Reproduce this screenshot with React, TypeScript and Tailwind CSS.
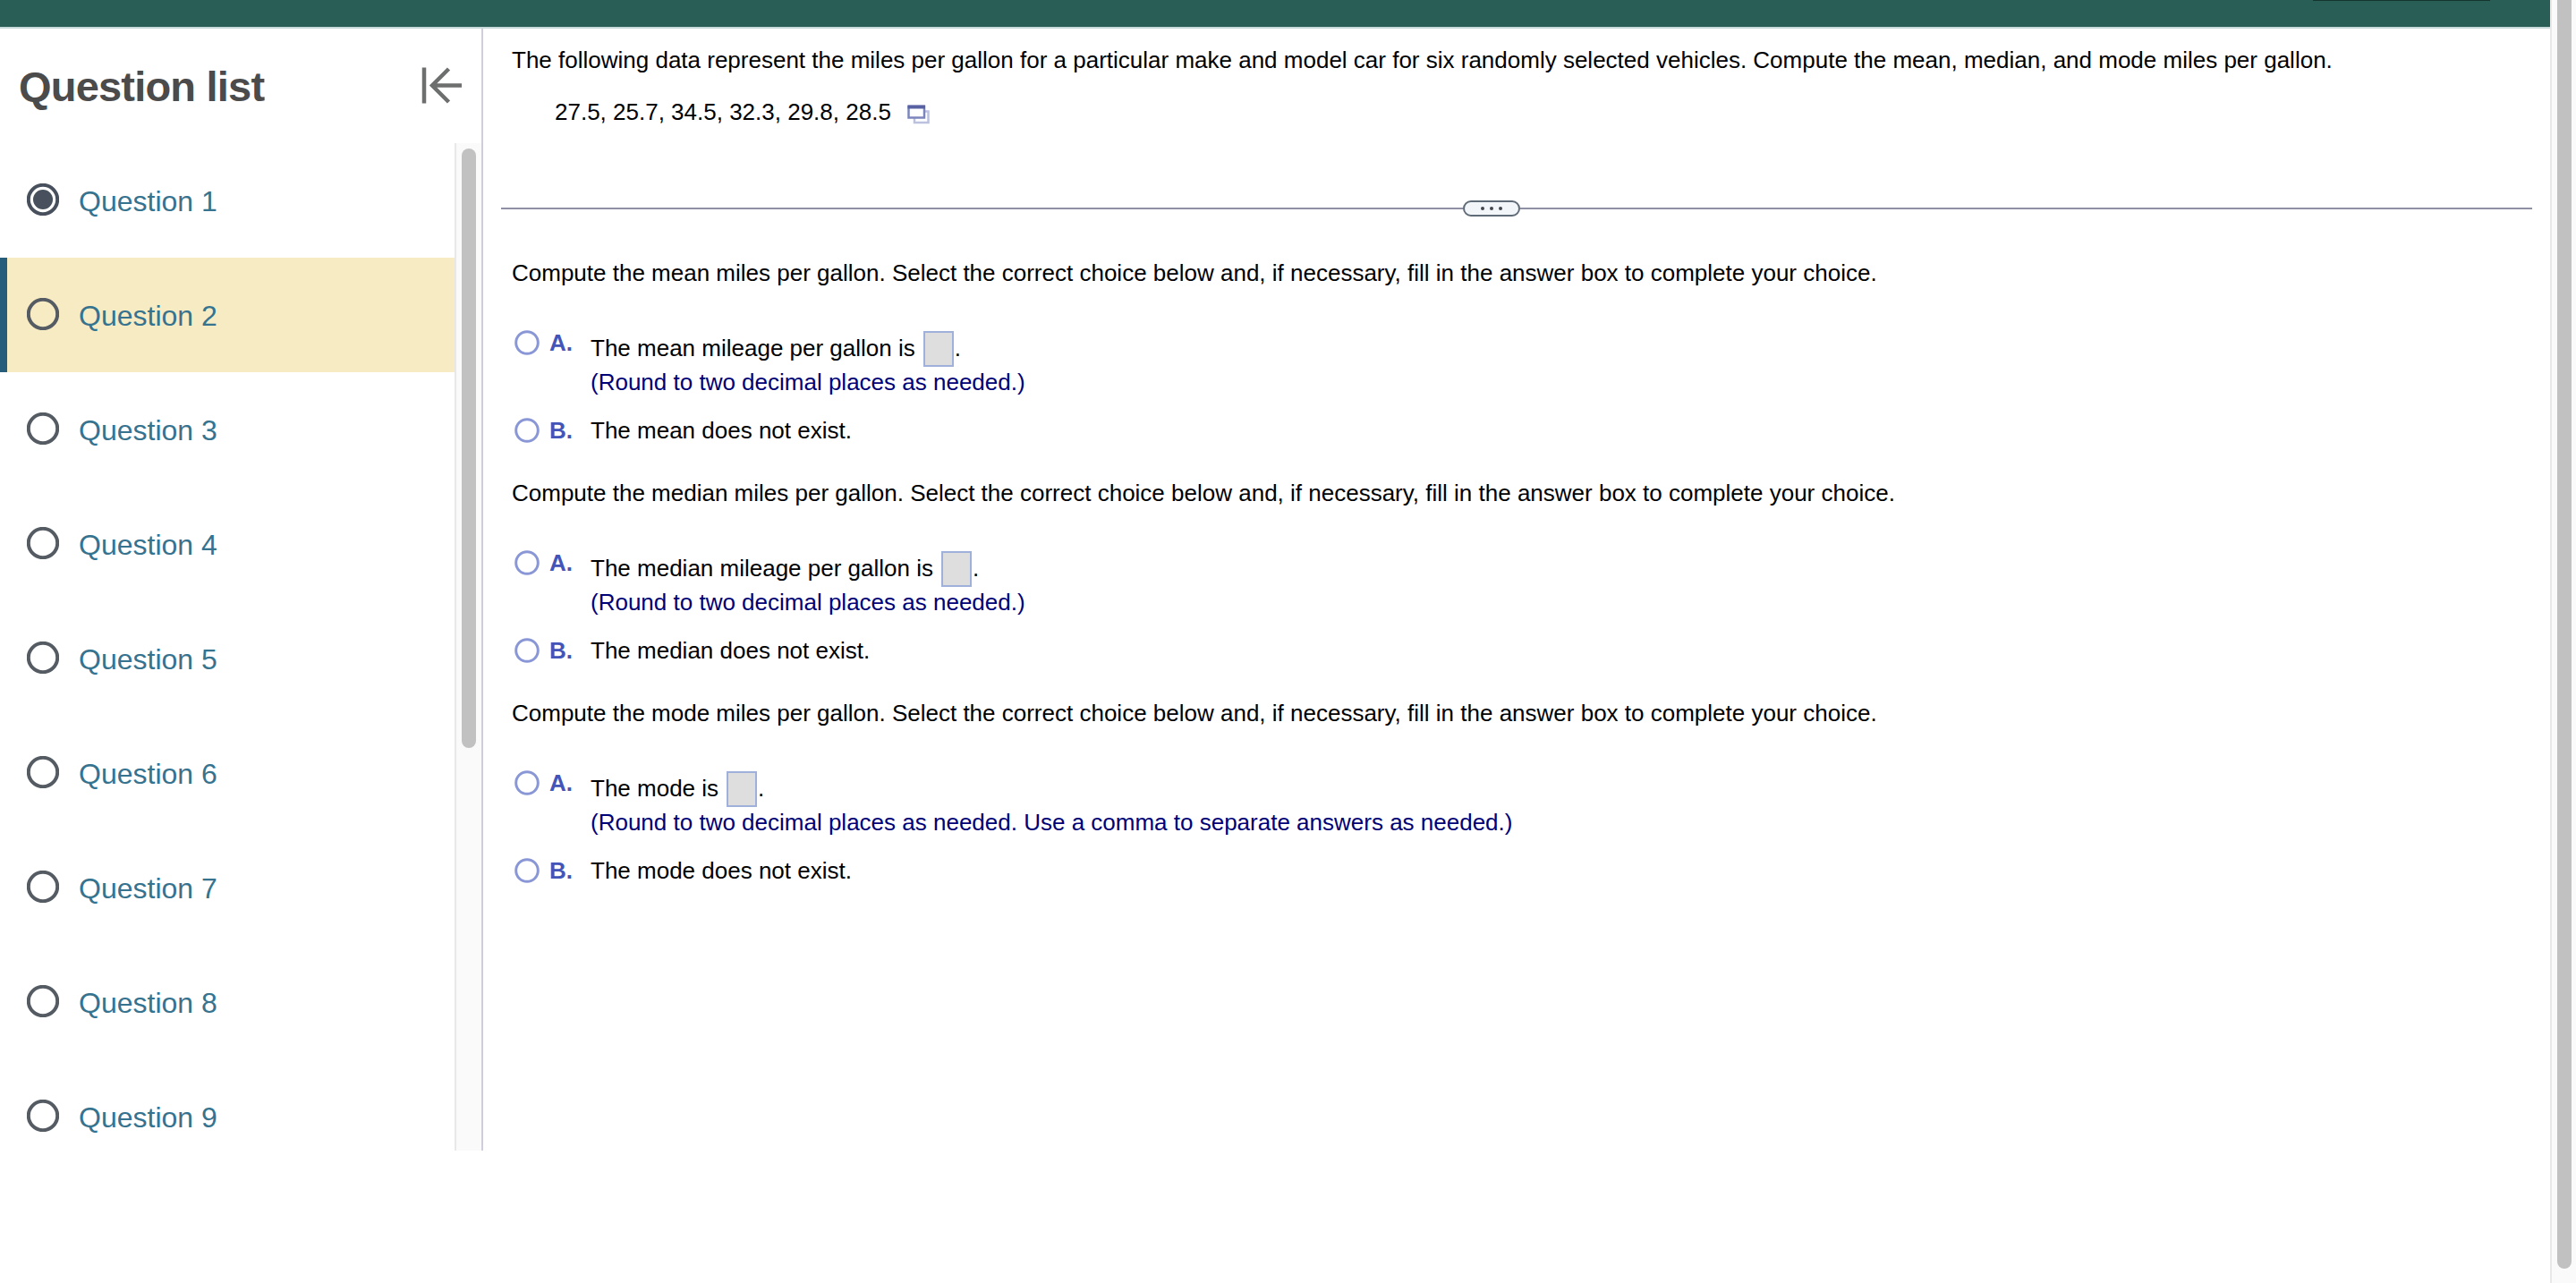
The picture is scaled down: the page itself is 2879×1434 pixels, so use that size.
import { useState } from "react";

const questions = [1, 2, 3, 4, 5, 6, 7, 8, 9];

const parts = [
  {
    name: "mean",
    answer: "The mean mileage per gallon is",
    hint: "(Round to two decimal places as needed.)",
  },
  {
    name: "median",
    answer: "The median mileage per gallon is",
    hint: "(Round to two decimal places as needed.)",
  },
  {
    name: "mode",
    answer: "The mode is",
    hint: "(Round to two decimal places as needed. Use a comma to separate answers as needed.)",
  },
];

const CollapseIcon = () => (
  <svg width="46" height="42" viewBox="0 0 46 42" fill="none" stroke="#6d6f6e" strokeWidth="4.500">
    <path d="M3 .5v40M11 20.500H45M30.500 2L12 20.500l18.500 18.500" />
  </svg>
);

const StatusIcon = ({ filled }: { filled: boolean }) => (
  <svg width="36" height="36" viewBox="0 0 36 36" className="shrink-0">
    <circle
      cx="18"
      cy="18"
      r="16.200"
      fill="none"
      stroke={filled ? "#47505c" : "#555b62"}
      strokeWidth="4"
    />
    {filled && <circle cx="18" cy="18" r="11" fill="#47505c" />}
  </svg>
);

const PopupIcon = () => (
  <svg width="26" height="22" viewBox="0 0 26 22" fill="none">
    <path d="M19 7.500h4.500v12.500H8v-5" stroke="#bcc1df" strokeWidth="2.500" />
    <rect x="1.500" y="2" width="17.500" height="12.500" fill="#fff" stroke="#7c85bd" strokeWidth="2.500" />
    <path d="M.5 2.500h19.500" stroke="#5862a3" strokeWidth="4" />
  </svg>
);

const Choice = ({
  letter,
  checked,
  onSelect,
  children,
}: {
  letter: string;
  checked: boolean;
  onSelect: () => void;
  children: React.ReactNode;
}) => (
  <div className="flex items-start pl-[3px] cursor-pointer" onClick={onSelect}>
    <svg width="28" height="28" viewBox="0 0 28 28" className="mt-px shrink-0">
      <circle cx="14" cy="14" r="12.300" fill="#fff" stroke="#8a97d6" strokeWidth="3" />
      {checked && <circle cx="14" cy="14" r="7" fill="#4355b9" />}
    </svg>
    <span className="ml-[11px] w-[46px] shrink-0 font-bold text-[#4355b9]">{letter}.</span>
    <div>{children}</div>
  </div>
);

const Sidebar = () => (
  <aside className="flex flex-col w-[540px] h-[1254px] shrink-0 border-r-2 border-[#cfcfdc]">
    <div className="flex justify-between items-start h-32 shrink-0 pl-[21px] pr-[21px]">
      <h1 className="mt-[37px] text-[47px] leading-[56px] font-bold tracking-[-0.800px] text-[#4b4b4b]">
        Question list
      </h1>
      <button className="mt-[43px] cursor-pointer">
        <CollapseIcon />
      </button>
    </div>
    <div className="flex flex-1 min-h-0">
      <ul className="flex-1 overflow-hidden">
        {questions.map((n) => (
          <li
            key={n}
            className={`flex items-start h-32 pt-[45px] border-l-8 pl-[22px] text-[32px] ${
              n === 2 ? "bg-[#f7ebc3] border-[#265d7b]" : "border-transparent"
            }`}
          >
            <StatusIcon filled={n === 1} />
            <a href="#" className="ml-[22px] mt-px leading-[38px] text-[#36738f]">
              Question {n}
            </a>
          </li>
        ))}
      </ul>
      <div className="w-[30px] border-l-2 border-[#e8e8e8] bg-[#fafafa] pt-1.5 pl-1.5">
        <div className="w-4 h-[670px] rounded-full bg-[#c1c1c1]" />
      </div>
    </div>
  </aside>
);

const App = () => {
  const [selected, setSelected] = useState<Record<string, string>>({});

  return (
    <div className="flex h-[1434px] overflow-hidden bg-white font-['Liberation_Sans',Arial,sans-serif] text-black">
      <div className="flex-1 min-w-0">
        <header className="h-8 bg-[#295e56] border-b-2 border-[#c8d9d9]">
          <div className="ml-[2585px] w-[198px] h-px bg-[#15332f]" />
        </header>
        <div className="flex">
          <Sidebar />
          <main className="flex-1 pt-5 pl-5 pr-5 text-[26px] leading-[30px] whitespace-nowrap">
            <div className="pl-3">
              <p>
                The following data represent the miles per gallon for a particular make and model
                car for six randomly selected vehicles. Compute the mean, median, and mode miles per
                gallon.
              </p>
              <div className="flex items-start mt-7 pl-12">
                <span>27.5, 25.7, 34.5, 32.3, 29.8, 28.5</span>
                <button className="ml-[18px] mt-[7px]">
                  <PopupIcon />
                </button>
              </div>
            </div>

            <div className="flex items-center h-[18px] mt-[84px]">
              <div className="w-[1075px] h-0.5 bg-[#9090a4]" />
              <button className="flex justify-center items-center gap-1.5 w-16 h-[18px] rounded-full border-2 border-[#5f6b77] bg-[#f3f6f9]">
                <span className="size-1 rounded-full bg-[#44484e]" />
                <span className="size-1 rounded-full bg-[#44484e]" />
                <span className="size-1 rounded-full bg-[#44484e]" />
              </button>
              <div className="flex-1 h-0.5 bg-[#9090a4]" />
            </div>

            <div className="flex flex-col gap-10 mt-12 pl-3">
              {parts.map((part) => (
                <section key={part.name}>
                  <p>
                    Compute the {part.name} miles per gallon. Select the correct choice below and,
                    if necessary, fill in the answer box to complete your choice.
                  </p>
                  <div className="flex flex-col gap-6 mt-12">
                    <Choice
                      letter="A"
                      checked={selected[part.name] === "A"}
                      onSelect={() => setSelected({ ...selected, [part.name]: "A" })}
                    >
                      <div className="flex items-start h-[42px] pt-0.5 mb-0.5 leading-[38px]">
                        {part.answer}
                        <span className="mr-px ml-[9px] w-[34px] h-10 border-2 border-[#9fb1db] bg-[#dedede]" />
                        .
                      </div>
                      <p className="text-[#000077]">{part.hint}</p>
                    </Choice>
                    <Choice
                      letter="B"
                      checked={selected[part.name] === "B"}
                      onSelect={() => setSelected({ ...selected, [part.name]: "B" })}
                    >
                      The {part.name} does not exist.
                    </Choice>
                  </div>
                </section>
              ))}
            </div>
          </main>
        </div>
      </div>

      {/* page scrollbar */}
      <div className="w-[29px] shrink-0 border-l-2 border-[#e8e8e8] bg-[#fafafa] pl-1.5">
        <div className="w-4 h-[1418px] rounded-b-full bg-[#c1c1c1]" />
      </div>
    </div>
  );
};

export default App;
